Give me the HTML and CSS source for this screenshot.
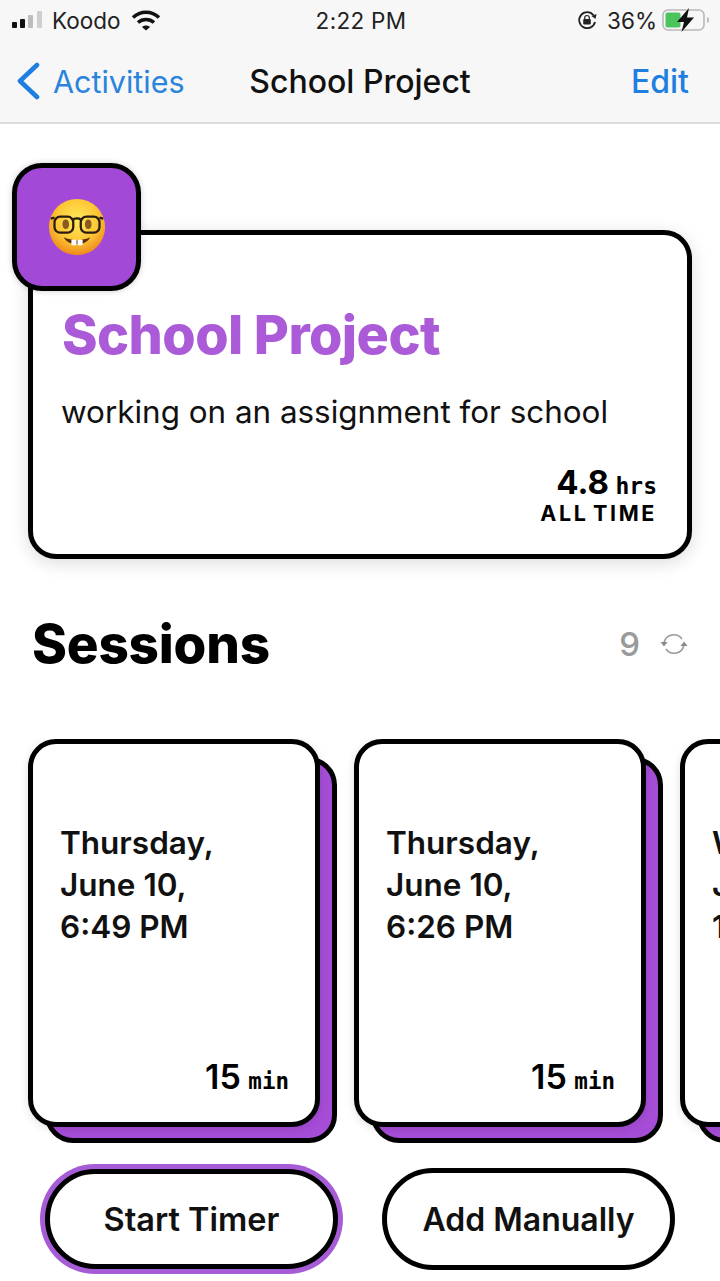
FILE: index.html
```html
<!DOCTYPE html>
<html lang="en">
<head>
    <meta charset="UTF-8">
    <meta name="viewport" content="width=device-width, initial-scale=1.0">
    <title>School Project</title>
    <link rel="stylesheet" href="styles.css">
</head>
<body>
    <div id="top">
        <div id="statusbar">
            <div class="status-left">
                <svg class="signal" width="32" height="20" viewBox="0 0 32 20">
                    <rect x="0" y="12" width="5" height="6" rx="1" fill="#111"/>
                    <rect x="8" y="9" width="5" height="9" rx="1" fill="#111"/>
                    <rect x="16" y="5" width="5" height="13" rx="1" fill="#bdbdbd"/>
                    <rect x="25" y="1" width="5" height="17" rx="1" fill="#cfcfcf"/>
                </svg>
                <span>Koodo</span>
                <svg class="wifi" width="30" height="22" viewBox="0 0 30 22">
                    <path d="M2 8.500C9.500 1.500 20.500 1.500 28 8.500" fill="none" stroke="#111" stroke-width="3.400"/>
                    <path d="M7 13.500C11.500 9.500 18.500 9.500 23 13.500" fill="none" stroke="#111" stroke-width="3.400"/>
                    <path d="M11 18C13 16 17 16 19 18L15 21.500Z" fill="#111"/>
                </svg>
            </div>
            <div class="status-time">2:22 PM</div>
            <div class="status-right">
                <svg class="lock" width="22" height="22" viewBox="0 0 22 22">
                    <path d="M19 13A8 8 0 1 1 17.500 6.200" fill="none" stroke="#222" stroke-width="1.800"/>
                    <path d="M20.500 5L19.500 10L15.500 7Z" fill="#222"/>
                    <rect x="7.200" y="10" width="7.600" height="5.600" rx="1" fill="#222"/>
                    <path d="M8.700 10V8.800A2.300 2.300 0 0 1 13.300 8.800V10" fill="none" stroke="#222" stroke-width="1.200"/>
                </svg>
                <span>36%</span>
                <svg class="battery" width="48" height="24" viewBox="0 0 48 24">
                    <rect x="1" y="2" width="41" height="20" rx="5" fill="none" stroke="#b9b9b9" stroke-width="1.600"/>
                    <rect x="3.500" y="4.500" width="15" height="15" rx="2" fill="#4cc45e"/>
                    <path d="M45 9V15C46.500 14.500 47 13.500 47 12C47 10.500 46.500 9.500 45 9Z" fill="#b9b9b9"/>
                    <path d="M27 0L15 14H22L19.500 24L32 9.500H25Z" fill="#111"/>
                </svg>
            </div>
        </div>
        <div id="navbar">
            <div class="nav-back">
                <svg width="26" height="38" viewBox="0 0 26 38">
                    <path d="M22 3L5 19L22 35" fill="none" stroke="#1f7fe0" stroke-width="4.600" stroke-linecap="round" stroke-linejoin="round"/>
                </svg>
                <span>Activities</span>
            </div>
            <div class="nav-title">School Project</div>
            <div class="nav-edit">Edit</div>
        </div>
    </div>

    <div id="main">
        <div class="hero">
            <div class="hero-icon">
                <svg width="60" height="60" viewBox="0 0 64 64">
                    <defs>
                        <radialGradient id="face" cx="50%" cy="38%" r="62%">
                            <stop offset="0%" stop-color="#ffe95c"/>
                            <stop offset="60%" stop-color="#fdc735"/>
                            <stop offset="100%" stop-color="#ee8a1c"/>
                        </radialGradient>
                    </defs>
                    <circle cx="32" cy="32" r="30" fill="url(#face)"/>
                    <ellipse cx="20" cy="29" rx="3.500" ry="5" fill="#8a5a20"/>
                    <ellipse cx="44" cy="29" rx="3.500" ry="5" fill="#8a5a20"/>
                    <path d="M4 23L8 22M56 22L60 23M28 24C30 22.500 34 22.500 36 24" fill="none" stroke="#2a1c10" stroke-width="2.400"/>
                    <rect x="8" y="21" width="20" height="17" rx="6" fill="none" stroke="#2a1c10" stroke-width="2.400"/>
                    <rect x="36" y="21" width="20" height="17" rx="6" fill="none" stroke="#2a1c10" stroke-width="2.400"/>
                    <path d="M18 43C25 47 39 47 46 43C42 53 22 53 18 43Z" fill="#5a2c10"/>
                    <rect x="26" y="45.500" width="5.500" height="6" rx="1" fill="#fff"/>
                    <rect x="32.500" y="45.500" width="5.500" height="6" rx="1" fill="#fff"/>
                </svg>
            </div>
            <h1 class="hero-title">School Project</h1>
            <p class="hero-desc">working on an assignment for school</p>
            <div class="hero-total">
                <div><b>4.8</b> <span class="unit">hrs</span></div>
                <div class="alltime">ALL TIME</div>
            </div>
        </div>

        <div class="sessions-head">
            <h2>Sessions</h2>
            <div class="sessions-count">
                <span>9</span>
                <svg width="28" height="24" viewBox="0 0 28 24">
                    <path d="M4 11A10 10 0 0 1 22 7M24 13A10 10 0 0 1 6 17" fill="none" stroke="#9a9a9a" stroke-width="1.500"/>
                    <path d="M0.500 10H7.500L4 14.500Z" fill="#8a8a8a"/>
                    <path d="M20.500 14H27.500L24 9.500Z" fill="#8a8a8a"/>
                </svg>
            </div>
        </div>

        <div class="sessions">
            <div class="session">
                <div class="session-card">
                    <div class="session-date">Thursday,<br>June 10,<br>6:49 PM</div>
                    <div class="session-len"><b>15</b> <span class="unit-mono">min</span></div>
                </div>
            </div>
            <div class="session">
                <div class="session-card">
                    <div class="session-date">Thursday,<br>June 10,<br>6:26 PM</div>
                    <div class="session-len"><b>15</b> <span class="unit-mono">min</span></div>
                </div>
            </div>
            <div class="session">
                <div class="session-card">
                    <div class="session-date">Wednesday,<br>June 9,<br>1:12 PM</div>
                    <div class="session-len"><b>15</b> <span class="unit-mono">min</span></div>
                </div>
            </div>
        </div>

        <div class="actions">
            <button class="btn btn-active">Start Timer</button>
            <button class="btn btn-plain">Add Manually</button>
        </div>
    </div>
</body>
</html>
```

FILE: styles.css
```css
*, *::before {
    box-sizing: border-box;
}

html, body {
    margin: 0;
    height: 1281px;
    overflow: hidden;
}

body {
    width: 720px;
    background-color: #fff;
    color: #000;
    font-family: Inter, "Liberation Sans", sans-serif;
}

#top {
    height: 124px;
    background-color: #f7f7f7;
    border-bottom: 2px solid #dcdcdc;
}

#statusbar {
    height: 40px;
    padding: 0 10px 0 12px;
    display: grid;
    grid-template-columns: 1fr auto 1fr;
    align-items: center;
    font-size: 22.5px;
    color: #222;
}

.status-left {
    display: flex;
    align-items: center;
    gap: 8px;
}

.wifi {
    margin-left: 3px;
}

.status-time {
    letter-spacing: 0.3px;
}

.status-right {
    display: flex;
    align-items: center;
    justify-content: flex-end;
    gap: 9px;
}

.battery {
    margin-left: -4px;
}

#navbar {
    height: 82px;
    padding: 0 31px;
    display: grid;
    grid-template-columns: 1fr auto 1fr;
    align-items: center;
    font-size: 32px;
}

.nav-back {
    margin-left: -16px;
    display: flex;
    align-items: center;
    gap: 12px;
    color: #2a84dc;
    font-size: 30.500px;
}

.nav-title {
    font-weight: 500;
    color: #111;
}

.nav-edit {
    text-align: right;
    color: #1f7fe0;
    font-weight: 500;
}

#main {
    padding-top: 106px;
}

.hero {
    position: relative;
    width: 664px;
    height: 329px;
    margin-left: 28px;
    padding: 68px 28px 0 29px;
    border: 5px solid #000;
    border-radius: 28px;
    background-color: #fff;
    box-shadow: 0 4px 18px rgba(0, 0, 0, 0.14);
}

.hero-icon {
    position: absolute;
    left: -21px;
    top: -72px;
    width: 129px;
    height: 128px;
    padding: 0 0 1px 0;
    border: 5px solid #000;
    border-radius: 30px;
    background-color: #a249d8;
    display: flex;
    align-items: center;
    justify-content: center;
    box-shadow: 0 0 6px rgba(0, 0, 0, 0.2);
}

.hero-title {
    margin: 0;
    font-size: 54px;
    line-height: 64px;
    font-weight: 800;
    color: #ab5ad8;
    letter-spacing: -0.6px;
}

.hero-desc {
    margin: 26px 0 0 -1px;
    font-size: 31.400px;
    line-height: 38px;
    color: #111;
}

.hero-total {
    position: absolute;
    right: 30px;
    bottom: 28px;
    text-align: right;
}

.hero-total b {
    font-size: 33px;
    line-height: 36px;
    font-weight: 700;
}

.unit {
    margin-left: 2px;
    font-family: "DejaVu Sans Mono", monospace;
    font-size: 23px;
    font-weight: 700;
}

.alltime {
    font-size: 21.500px;
    line-height: 26px;
    font-weight: 700;
    letter-spacing: 2.600px;
    word-spacing: -3px;
}

.sessions-head {
    height: 180px;
    padding: 0 32px 10px 32px;
    display: flex;
    align-items: center;
    justify-content: space-between;
}

.sessions-head h2 {
    margin: 0;
    font-size: 53px;
    font-weight: 800;
    letter-spacing: -0.2px;
}

.sessions-count {
    display: flex;
    align-items: center;
    gap: 20px;
    color: #9a9a9a;
    font-size: 33px;
    font-weight: 500;
}

.sessions {
    height: 429px;
    padding-left: 28px;
    display: flex;
    gap: 34px;
    overflow: hidden;
}

.session {
    position: relative;
    flex: 0 0 292px;
    height: 388px;
}

.session::before {
    content: "";
    position: absolute;
    left: 17px;
    top: 18px;
    width: 292px;
    height: 386px;
    border: 5px solid #000;
    border-radius: 28px;
    background-color: #a64dd8;
}

.session-card {
    position: relative;
    height: 100%;
    padding: 78px 27px 0 27px;
    border: 5px solid #000;
    border-radius: 28px;
    background-color: #fff;
    box-shadow: 0 2px 10px rgba(0, 0, 0, 0.12);
}

.session-date {
    font-size: 31.500px;
    line-height: 42px;
    font-weight: 600;
    color: #111;
}

.session-len {
    position: absolute;
    right: 26px;
    bottom: 25px;
}

.session-len b {
    font-size: 34px;
    font-weight: 600;
}

.unit-mono {
    margin-left: 3px;
    font-family: "DejaVu Sans Mono", monospace;
    font-size: 22.500px;
    font-weight: 700;
}

.actions {
    display: flex;
    align-items: center;
    padding-left: 45px;
    gap: 44px;
}

.btn {
    font-family: Inter, "Liberation Sans", sans-serif;
    font-size: 32.500px;
    font-weight: 600;
    color: #111;
    background-color: #fff;
    border: 5px solid #000;
    border-radius: 51px;
}

.btn-active {
    width: 293px;
    height: 100px;
    box-shadow: 0 0 0 5px #a65cd6;
}

.btn-plain {
    width: 293px;
    height: 102px;
    font-size: 32px;
}
```
